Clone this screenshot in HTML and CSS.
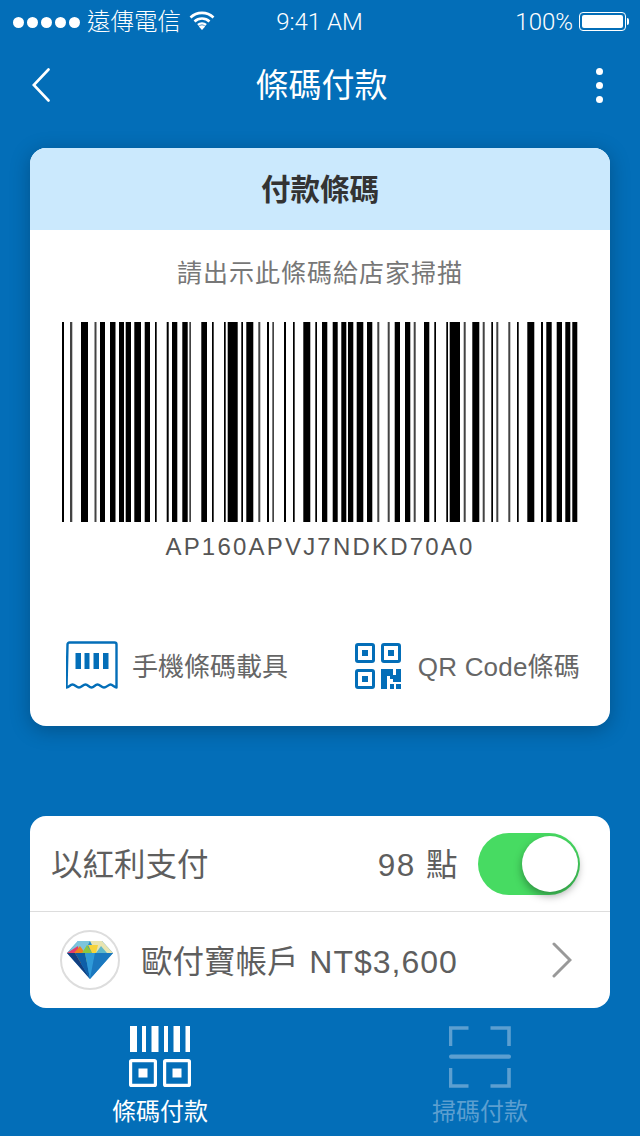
FILE: index.html
```html
<!DOCTYPE html>
<html lang="zh-Hant">
<head>
  <meta charset="UTF-8" />
  <meta name="viewport" content="width=device-width, initial-scale=1.0"/>
  <title>條碼付款</title>
  <link rel="stylesheet" href="styles.css">
</head>
<body>
<div class="statusbar">
  <div class="status-left">
    <span class="dots"><i></i><i></i><i></i><i></i><i></i></span>
    <span class="carrier">遠傳電信</span>
    <svg class="wifi" width="26" height="19" viewBox="0 0 26 19">
      <path d="M1.5 6.5a16.5 16.5 0 0 1 23 0M5.5 10.5a11 11 0 0 1 15 0M9 14a6 6 0 0 1 8 0" fill="none" stroke="#fff" stroke-width="2.6"/>
      <path d="M13 19l-3.200-3.400a4.600 4.600 0 0 1 6.400 0z" fill="#fff"/>
    </svg>
  </div>
  <div class="status-time">9:41 AM</div>
  <div class="status-right">
    <span>100%</span>
    <span class="battery"><i></i></span>
  </div>
</div>

<header class="navbar">
  <svg class="nav-back" width="18" height="34" viewBox="0 0 18 34">
    <path d="M16.500 1.500L1.800 17l14.700 15.500" fill="none" stroke="#fff" stroke-width="2.600" stroke-linecap="round"/>
  </svg>
  <h1>條碼付款</h1>
  <div class="nav-more"><i></i><i></i><i></i></div>
</header>

<main class="content">
  <section class="card pay-card">
    <h2 class="card-title">付款條碼</h2>
    <p class="hint">請出示此條碼給店家掃描</p>
    <svg class="barcode" width="516" height="200" viewBox="62 0 516 200">
      <path fill="#000" d="M62 0h2v200h-2zM81 0h7v200h-7zM100 0h5v200h-5zM110 0h5.500v200h-5.500zM119 0h5v200h-5zM125.700 0h5.300v200h-5.300zM134.300 0h6.700v200h-6.700zM144.700 0h5.300v200h-5.300zM155 0h1.700v200h-1.700zM166.700 0h2v200h-2zM172 0h5.300v200h-5.300zM182.300 0h5.400v200h-5.400zM201.300 0h5.700v200h-5.700zM212 0h1.700v200h-1.700zM224 0h1.700v200h-1.700zM227.700 0h10v200h-10zM241.300 0h1.700v200h-1.700zM246.300 0h7v200h-7zM267 0h2v200h-2zM284 0h2v200h-2zM293 0h1.700v200h-1.700zM303.300 0h7v200h-7zM315.300 0h1.700v200h-1.700zM322 0h5.300v200h-5.300zM332.700 0h5v200h-5zM341.300 0h5v200h-5zM348 0h5.300v200h-5.300zM356.700 0h6.600v200h-6.600zM367 0h5.300v200h-5.300zM394.700 0h5.300v200h-5.300zM405 0h5.300v200h-5.300zM424 0h5.300v200h-5.300zM434.300 0h1.700v200h-1.700zM446.300 0h1.700v200h-1.700zM449.700 0h10.300v200h-10.300zM472.300 0h7v200h-7zM491.300 0h1.700v200h-1.700zM517 0h1.700v200h-1.700zM527.300 0h7v200h-7zM541 0h2v200h-2zM546.300 0h5.400v200h-5.400zM556.700 0h5.300v200h-5.300zM565.300 0h5v200h-5zM572.300 0h5v200h-5z"/>
      <path fill="#444" d="M70 0h2.300v200h-2.300zM94.500 0h2v200h-2zM189.300 0h1.700v200h-1.700zM258.300 0h2v200h-2zM272.300 0h1.700v200h-1.700zM377.300 0h2v200h-2zM387.700 0h2v200h-2zM413.700 0h2v200h-2zM463.700 0h2v200h-2zM482.700 0h2v200h-2zM496.300 0h2v200h-2zM508.300 0h2v200h-2z"/>
    </svg>
    <div class="code-text">AP160APVJ7NDKD70A0</div>
    <div class="pay-actions">
      <div class="action action-receipt">
        <svg width="52" height="50" viewBox="0 0 52 50">
          <path d="M1.500 3.500a2 2 0 0 1 2-2h45a2 2 0 0 1 2 2v43c-2 0-4-3-6-3s-4 3-6.500 3-4-3-6.500-3-3.500 3-6 3-3.500-3-6-3-4 3-6.500 3-4-3-6.500-3-3.500 3-6 3z" fill="none" stroke="#036eb8" stroke-width="2.400" stroke-linejoin="round"/>
          <path d="M9.500 12h5.500v16h-5.500zM18.500 12h5v16h-5zM27.500 12h5.500v16h-5.500zM37 12h5.500v16h-5.500z" fill="#036eb8"/>
        </svg>
        <span>手機條碼載具</span>
      </div>
      <div class="action action-qr">
        <svg width="46" height="46" viewBox="0 0 46 46">
          <g fill="none" stroke="#036eb8" stroke-width="3">
            <rect x="1.500" y="1.500" width="17" height="17" rx="1.500"/>
            <rect x="27.500" y="1.500" width="17" height="17" rx="1.500"/>
            <rect x="1.500" y="27.500" width="17" height="17" rx="1.500"/>
          </g>
          <path fill="#036eb8" d="M7 7h6v6h-6zM33 7h6v6h-6zM7 33h6v6h-6zM26 26h12v6h3v-6h5v13h-8v-3h-3v-3h-3v13h-6zM35 41h4v5h-4zM41 41h5v5h-5z"/>
        </svg>
        <span>QR Code條碼</span>
      </div>
    </div>
  </section>

  <section class="card wallet-card">
    <div class="row row-points">
      <span class="row-label">以紅利支付</span>
      <span class="points">98 點</span>
      <span class="toggle"><i></i></span>
    </div>
    <div class="row row-account">
      <span class="gem">
        <svg width="48" height="40" viewBox="0 0 48 40">
          <path d="M12 1h24l11 12-23 26L1 13z" fill="#2a8ccc"/>
          <path d="M12 1h12l-6 12H1z" fill="#7cc4dc"/>
          <path d="M24 1h12l11 12H30z" fill="#e8e4b0"/>
          <path d="M1 13l11-7 1 7z" fill="#e33b6c"/>
          <path d="M8 13l6-7 5 7 -5 13z" fill="#f0821e"/>
          <path d="M16 13l5-8 5 8-4 12z" fill="#8cc63f"/>
          <path d="M26 13l-4-8h10l-2 8z" fill="#f6d33c"/>
          <path d="M30 13l5-7 6 7-10 3z" fill="#5fb8c8"/>
          <path d="M1 13h8l15 26z" fill="#123f80"/>
          <path d="M9 13h10l5 26z" fill="#0e5fa8"/>
          <path d="M19 13h10l-5 26z" fill="#2f9ad8"/>
          <path d="M29 13h18L24 39z" fill="#1b78bf"/>
        </svg>
      </span>
      <span class="row-label account-name">歐付寶帳戶 <span class="amount">NT$3,600</span></span>
      <svg class="row-arrow" width="20" height="36" viewBox="0 0 20 36">
        <path d="M2 2l16 16L2 34" fill="none" stroke="#999" stroke-width="3" stroke-linecap="round"/>
      </svg>
    </div>
  </section>
</main>

<nav class="tabbar">
  <div class="tab tab-active">
    <svg width="62" height="62" viewBox="0 0 62 62">
      <path fill="#fff" d="M1 0h7v26h-7zM13 0h4v26h-4zM22.500 0h7v26h-7zM35 0h4v26h-4zM44.500 0h6.500v26h-6.500zM56.500 0h4.500v26h-4.500z"/>
      <g fill="none" stroke="#fff" stroke-width="3.200">
        <rect x="1.600" y="34.600" width="24.800" height="24.800" rx="1"/>
        <rect x="35.600" y="34.600" width="24.800" height="24.800" rx="1"/>
      </g>
      <path fill="#fff" d="M9.500 42.500h9v9h-9zM43.500 42.500h9v9h-9z"/>
    </svg>
    <span>條碼付款</span>
  </div>
  <div class="tab">
    <svg width="62" height="62" viewBox="0 0 62 62" class="scan-icon">
      <path d="M1.500 20V2h18M41.500 2h18.500v18M1.500 42v18h18M41.500 60h18.500v-18" fill="none" stroke="#5c9fd0" stroke-width="3.600"/>
      <rect x="0" y="28.500" width="62" height="4.200" rx="2" fill="#5c9fd0"/>
    </svg>
    <span>掃碼付款</span>
  </div>
</nav>
</body>
</html>
```

FILE: styles.css
```css
* { box-sizing: border-box; }
html, body { margin: 0; padding: 0; }
body {
  width: 640px;
  height: 1136px;
  overflow: hidden;
  background-color: #036eb8;
  color: #fff;
  font-family: "Liberation Sans", "Noto Sans CJK TC", sans-serif;
}

.statusbar {
  height: 44px;
  display: grid;
  grid-template-columns: 1fr auto 1fr;
  align-items: center;
  font-family: Roboto, "Noto Sans CJK TC", sans-serif;
  font-weight: 300;
  font-size: 24px;
  padding: 0 14px 0 13px;
}
.status-left, .status-right { display: flex; align-items: center; }
.status-right { justify-content: flex-end; }
.dots { display: flex; gap: 3px; margin-right: 7px; }
.dots i { width: 11px; height: 11px; border-radius: 50%; background: #fff; }
.carrier { font-size: 23.500px; margin-bottom: 5px; }
.wifi { margin-left: 8px; margin-bottom: 4px; }
.battery {
  position: relative;
  width: 47px;
  height: 19px;
  margin-left: 6px;
  margin-bottom: 2px;
  padding: 2px;
  border: 1px solid #fff;
  border-radius: 4px;
}
.battery i { display: block; height: 100%; background: #fff; border-radius: 2px; }
.battery::after {
  content: "";
  position: absolute;
  right: -4px;
  top: 5px;
  width: 2px;
  height: 7px;
  background: #fff;
  border-radius: 0 2px 2px 0;
}

.navbar {
  height: 82px;
  padding: 0 37px 0 32px;
  display: flex;
  align-items: center;
  justify-content: space-between;
}
.navbar h1 { margin: 0 3px 4px 0; font-size: 33px; font-weight: 400; }
.nav-more { display: flex; flex-direction: column; gap: 7px; }
.nav-more i { width: 7px; height: 7px; background: #fff; border-radius: 50%; }

.content { padding: 22px 30px 0; }
.card { background: #fff; border-radius: 16px; overflow: hidden; color: #555; }

.pay-card { height: 578px; box-shadow: 0 4px 20px rgba(0, 0, 0, 0.25); }
.card-title {
  margin: 0;
  height: 82px;
  line-height: 83px;
  background: #cbe9fd;
  color: #333;
  font-size: 29.500px;
  text-align: center;
}
.hint {
  margin: 26px 0 0;
  font-size: 25px;
  line-height: 34px;
  letter-spacing: 1px;
  color: #777;
  text-align: center;
}
.barcode { display: block; margin: 32px 0 0 32px; }
.code-text {
  margin-top: 10px;
  font-size: 24px;
  line-height: 30px;
  letter-spacing: 2.200px;
  text-align: center;
  color: #555;
}
.pay-actions {
  margin-top: 79px;
  padding: 0 30px 0 36px;
  display: flex;
  justify-content: space-between;
  font-size: 26px;
  color: #666;
}
.action { display: flex; align-items: center; }
.action svg { display: block; }
.action span { padding-bottom: 4px; }
.action-receipt span { margin-left: 14px; }
.action-qr span { margin-left: 17px; letter-spacing: 0.2px; }

.wallet-card { margin-top: 90px; height: 192px; }
.row { display: flex; align-items: center; font-size: 31.500px; color: #5e5e5e; }
.row-points { height: 96px; padding: 0 30px 0 21px; border-bottom: 1px solid #ddd; }
.row-label { flex: 1; padding-bottom: 3px; }
.points { margin-right: 19px; padding-bottom: 3px; letter-spacing: 1.500px; }
.toggle {
  position: relative;
  width: 102px;
  height: 62px;
  border-radius: 31px;
  background: #47db62;
}
.toggle i {
  position: absolute;
  top: 3px;
  right: 2px;
  width: 56px;
  height: 56px;
  border-radius: 50%;
  background: #fff;
  box-shadow: 0 4px 8px rgba(0, 0, 0, 0.35);
}
.row-account { height: 96px; padding: 0 38px 0 30px; }
.amount { font-size: 32px; letter-spacing: 1px; margin-left: 2px; }
.gem {
  width: 60px;
  height: 60px;
  flex: none;
  display: flex;
  align-items: center;
  justify-content: center;
  border: 2px solid #ddd;
  border-radius: 50%;
  margin-right: 21px;
}
.row-arrow { flex: none; }

.tabbar { margin-top: 18px; display: flex; }
.tab {
  width: 320px;
  display: flex;
  flex-direction: column;
  align-items: center;
  font-size: 24px;
  color: #5c9fd0;
}
.tab-active { color: #fff; }
.tab svg { display: block; margin-bottom: 7px; }
.tab span { line-height: 34px; }
```
